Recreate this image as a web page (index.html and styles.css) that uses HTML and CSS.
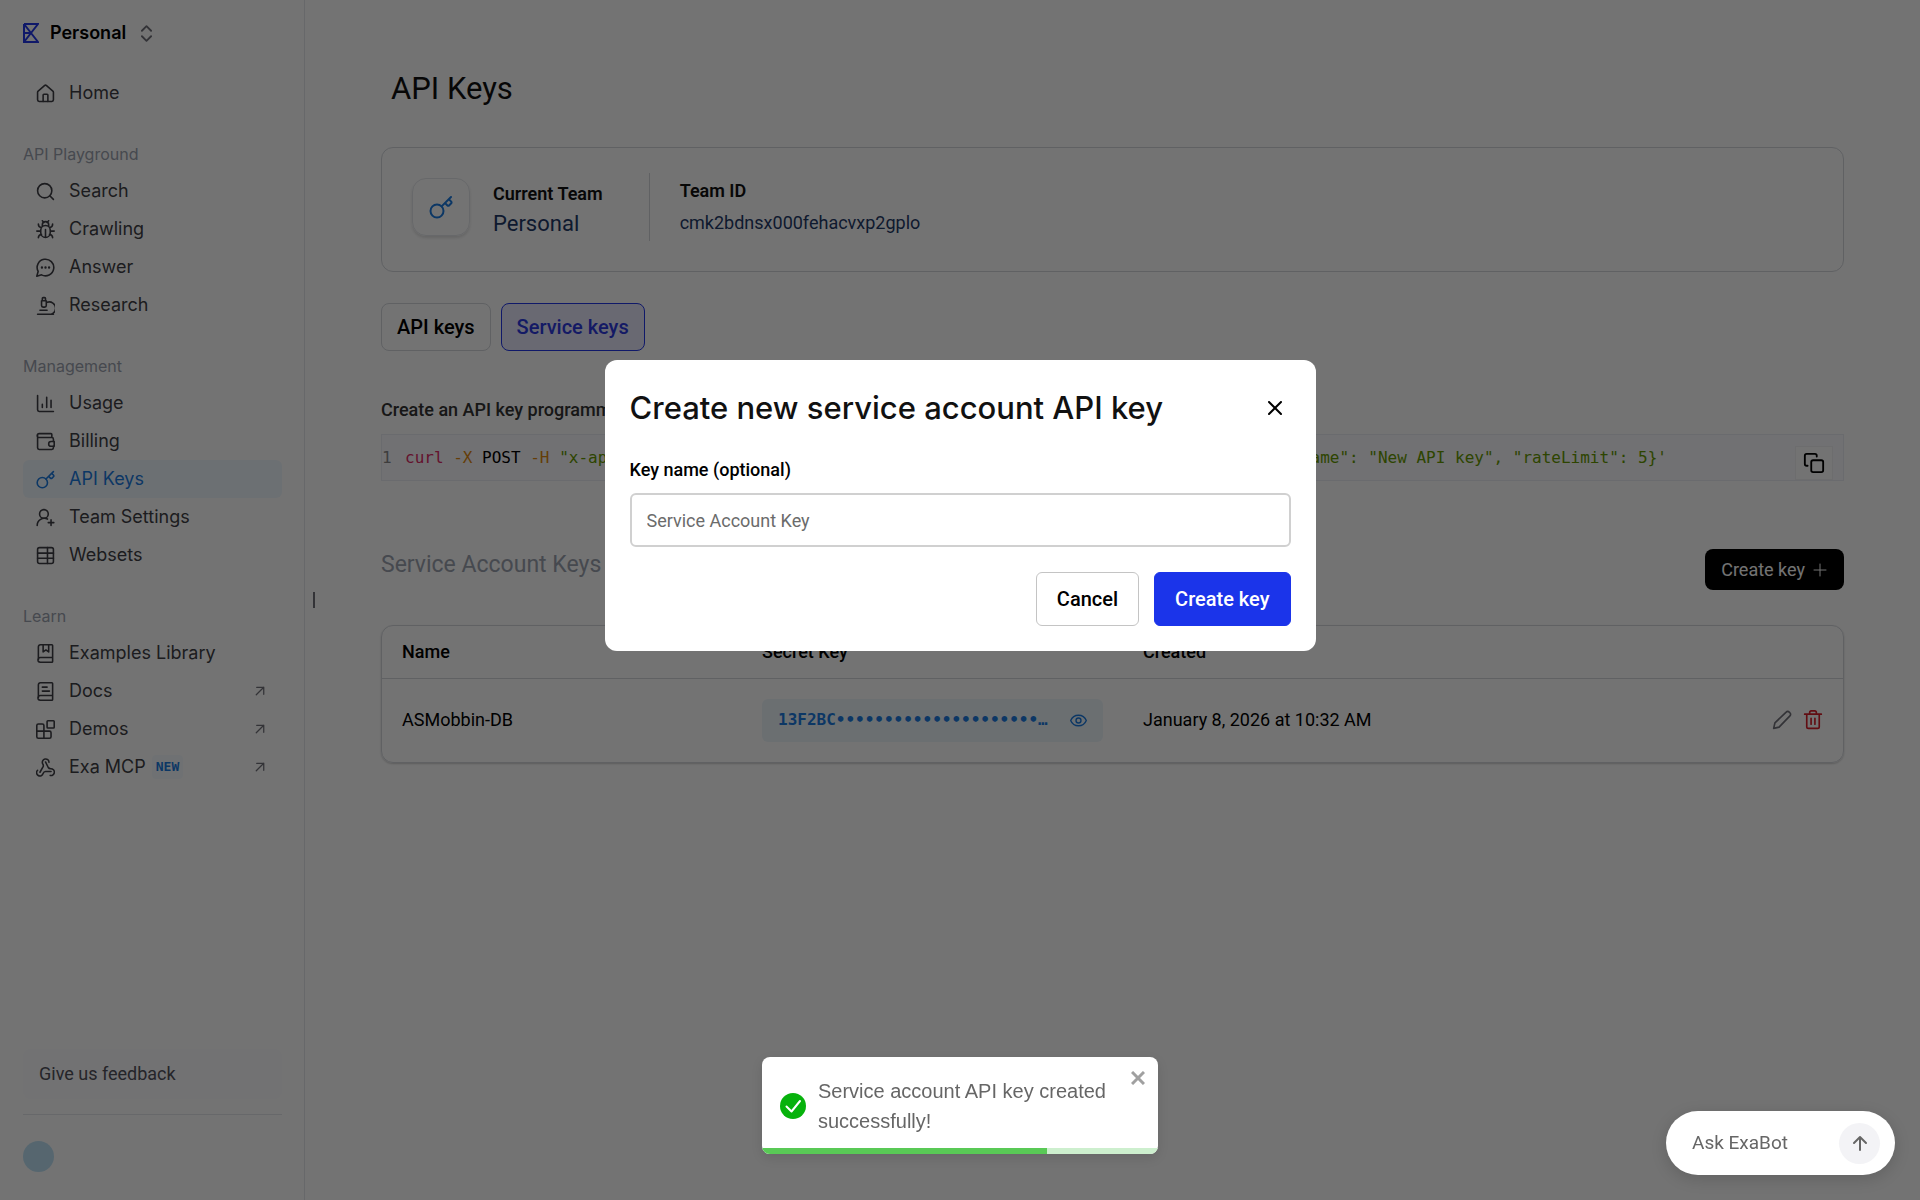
FILE: index.html
```html
<!DOCTYPE html>
<html lang="en">
<head>
    <meta charset="UTF-8">
    <meta name="viewport" content="width=device-width, initial-scale=1.0">
    <title>API Keys</title>
    <link rel="stylesheet" href="styles.css">
</head>
<body>
    <svg class="defs" width="0" height="0">
        <symbol id="key" viewBox="0 0 24 24">
            <circle cx="8" cy="16" r="6.500"/>
            <path d="M12.600 11.400 22 2M16 8l2.200 2.200a1.500 1.500 0 0 0 2.100 0l1.700-1.700a1.500 1.500 0 0 0 0-2.100L19.800 4.200"/>
        </symbol>
        <symbol id="arrow" viewBox="0 0 24 24">
            <path d="M3 21 21 3M4 3h17v17"/>
        </symbol>
    </svg>
    <div class="app">
        <aside class="sidebar">
            <button class="team">
                <svg class="logo" viewBox="0 0 16 20"><path d="M1 1h14L1 19M1 1v18h14L1 1M1 10h7"/></svg>
                Personal
                <svg class="sorter" viewBox="0 0 12 18"><path d="m1 6 5-5 5 5M1 12l5 5 5-5"/></svg>
            </button>
            <nav>
                <ul class="group">
                    <li><a href="#"><svg class="icon" viewBox="0 0 24 24"><path d="M15 22v-8a1 1 0 0 0-1-1h-4a1 1 0 0 0-1 1v8"/><path d="M2 10.500a2 2 0 0 1 .7-1.500l8-7a2 2 0 0 1 2.600 0l8 7a2 2 0 0 1 .7 1.500V20a2 2 0 0 1-2 2H4a2 2 0 0 1-2-2z"/></svg>Home</a></li>
                </ul>
                <h2>API Playground</h2>
                <ul class="group">
                    <li><a href="#"><svg class="icon" viewBox="0 0 24 24"><circle cx="11" cy="11" r="9"/><path d="m22 22-4.600-4.600"/></svg>Search</a></li>
                    <li><a href="#"><svg class="icon" viewBox="0 0 24 24"><path d="M6 13a6 6 0 0 1 12 0v3a6 6 0 0 1-12 0zM12 21v-9M8 7.500V6a4 4 0 0 1 8 0v1.500M8 1l2 2M16 1l-2 2M6 14H1M23 14h-5M6.500 9.500C4 9 3 7.500 3 5M17.500 9.500C20 9 21 7.500 21 5M7 18c-2.500.5-4 2-4 4.500M17 18c2.500.5 4 2 4 4.500"/></svg>Crawling</a></li>
                    <li><a href="#"><svg class="icon" viewBox="0 0 24 24"><path d="M7 21.300A10.500 10.500 0 1 0 2.700 17L1 23z"/><path class="dots" d="M7.500 12h.01M12 12h.01M16.500 12h.01"/></svg>Answer</a></li>
                    <li><a href="#"><svg class="icon" viewBox="0 0 24 24"><path d="M5 18h9M2 23h20M14 23a8 8 0 1 0 0-15h-1M9 14h2M7 12V6h6v6a2 2 0 0 1-2 2H9a2 2 0 0 1-2-2zM12 6V3a1 1 0 0 0-1-1H9a1 1 0 0 0-1 1v3"/></svg>Research</a></li>
                </ul>
                <h2>Management</h2>
                <ul class="group">
                    <li><a href="#"><svg class="icon" viewBox="0 0 24 24"><path d="M2 2v18a2 2 0 0 0 2 2h18M8 17v-4M13.500 17V4M19 17V8"/></svg>Usage</a></li>
                    <li><a href="#"><svg class="icon" viewBox="0 0 24 24"><path d="M20 7V3a1 1 0 0 0-1-1H4a2 2 0 0 0 0 5h16a2 2 0 0 1 2 2v3M2 4v16a2 2 0 0 0 2 2h16a2 2 0 0 0 2-2v-2"/><path d="M23 12h-4a3 3 0 0 0 0 6h4z"/></svg>Billing</a></li>
                    <li><a class="active" href="#"><svg class="icon"><use href="#key"/></svg>API Keys</a></li>
                    <li><a href="#"><svg class="icon" viewBox="0 0 24 24"><path d="M1.500 22a9 9 0 0 1 13-8M19 15v7M15.500 18.500h7"/><circle cx="10" cy="7.500" r="5.500"/></svg>Team Settings</a></li>
                    <li><a href="#"><svg class="icon" viewBox="0 0 24 24"><rect x="2" y="2" width="20" height="20" rx="2.500"/><path d="M2 9h20M2 15.500h20M14.500 2v20"/></svg>Websets</a></li>
                </ul>
                <h2>Learn</h2>
                <ul class="group">
                    <li><a href="#"><svg class="icon" viewBox="0 0 24 24"><path d="M3 20V3.500A2.500 2.500 0 0 1 5.500 1H20a1 1 0 0 1 1 1v20a1 1 0 0 1-1 1H5.500a2.500 2.500 0 0 1 0-6H21M9 1v9l3.500-2.500L16 10V1"/></svg>Examples Library</a></li>
                    <li><a href="#"><svg class="icon" viewBox="0 0 24 24"><path d="M3 20V3.500A2.500 2.500 0 0 1 5.500 1H20a1 1 0 0 1 1 1v20a1 1 0 0 1-1 1H5.500a2.500 2.500 0 0 1 0-6H21M8 6.500h6M8 11.500h9"/></svg>Docs<svg class="out"><use href="#arrow"/></svg></a></li>
                    <li><a href="#"><svg class="icon" viewBox="0 0 24 24"><rect x="14" y="1" width="9" height="9" rx="1"/><path d="M10 23V7a2 2 0 0 0-2-2H3a2 2 0 0 0-2 2v14a2 2 0 0 0 2 2h14a2 2 0 0 0 2-2v-5a2 2 0 0 0-2-2H1"/></svg>Demos<svg class="out"><use href="#arrow"/></svg></a></li>
                    <li><a href="#"><svg class="icon" viewBox="0 0 24 24"><path d="M19 17h-7c-2 0-2.500 1-3 2.500a4.200 4.200 0 1 1-7-4M5 18l4-7c.8-1.500.2-2.500-.6-3.800a4.200 4.200 0 1 1 8-1.700M12 5l3.500 7c.8 1.400 1.800 1.500 3.200 1.500a4.300 4.300 0 1 1-.7 8.500"/></svg>Exa MCP<span class="new">NEW</span><svg class="out"><use href="#arrow"/></svg></a></li>
                </ul>
            </nav>
            <div class="bottom">
                <button class="feedback">Give us feedback</button>
                <button class="avatar" aria-label="Account"></button>
            </div>
        </aside>
        <div class="handle"></div>
        <main>
            <h1>API Keys</h1>
            <section class="card">
                <div class="keyBox"><svg><use href="#key"/></svg></div>
                <div class="current">
                    <h3>Current Team</h3>
                    <p>Personal</p>
                </div>
                <div class="teamId">
                    <h3>Team ID</h3>
                    <p>cmk2bdnsx000fehacvxp2gplo</p>
                </div>
            </section>
            <div class="tabs">
                <button class="tab">API keys</button>
                <button class="tab selected">Service keys</button>
            </div>
            <p class="hint">Create an API key programmatically</p>
            <div class="code">
                <span class="line">1</span>
                <code><span class="cmd">curl</span> <span class="flag">-X</span> POST <span class="flag">-H</span> <span class="str">"x-api-key: API_KEY"</span> https://admin-api.exa.ai/team-management/api-keys <span class="flag">-d</span> <span class="str">'{"name": "New API key", "rateLimit": 5}'</span></code>
                <button class="copy" aria-label="Copy"><svg viewBox="0 0 24 24"><rect x="9" y="9" width="13" height="13" rx="2"/><path d="M5 15H4a2 2 0 0 1-2-2V4a2 2 0 0 1 2-2h9a2 2 0 0 1 2 2v1"/></svg></button>
            </div>
            <div class="listHead">
                <h2>Service Account Keys</h2>
                <button class="create">Create key <svg viewBox="0 0 14 14"><path d="M7 1v12M1 7h12"/></svg></button>
            </div>
            <div class="tableBox">
                <table>
                    <thead>
                        <tr><th class="colName">Name</th><th class="colKey">Secret Key</th><th>Created</th><th class="colActions"></th></tr>
                    </thead>
                    <tbody>
                        <tr>
                            <td>ASMobbin-DB</td>
                            <td>
                                <div class="secret">
                                    <span>13F2BC•••••••••••••••••••••…</span>
                                    <button aria-label="Show key"><svg viewBox="0 0 24 24"><path d="M1 12c4-10 18-10 22 0-4 10-18 10-22 0z"/><circle cx="12" cy="12" r="3.500"/></svg></button>
                                </div>
                            </td>
                            <td>January 8, 2026 at 10:32 AM</td>
                            <td>
                                <div class="actions">
                                    <button aria-label="Edit"><svg viewBox="0 0 24 24"><path d="M2 22l1.500-6.500L17 2.500a2.500 2.500 0 0 1 3.700 0l.8.8a2.500 2.500 0 0 1 0 3.700L8.500 20.500z"/></svg></button>
                                    <button class="delete" aria-label="Delete"><svg viewBox="0 0 24 24"><path d="M2 5h20M4.500 5v15a2 2 0 0 0 2 2h11a2 2 0 0 0 2-2V5M8 5V3a2 2 0 0 1 2-2h4a2 2 0 0 1 2 2v2M9.700 10v7M14.300 10v7"/></svg></button>
                                </div>
                            </td>
                        </tr>
                    </tbody>
                </table>
            </div>
        </main>
    </div>

    <div class="overlay">
        <form class="modal" role="dialog" aria-labelledby="modalTitle">
            <div class="modalHead">
                <h2 id="modalTitle">Create new service account API key</h2>
                <button class="close" type="button" aria-label="Close"><svg viewBox="0 0 14 14"><path d="M1 1l12 12M13 1 1 13"/></svg></button>
            </div>
            <label for="keyName">Key name (optional)</label>
            <input id="keyName" type="text" placeholder="Service Account Key">
            <div class="modalButtons">
                <button class="cancel" type="button">Cancel</button>
                <button class="submit" type="button">Create key</button>
            </div>
        </form>
    </div>

    <div class="toast" role="status">
        <svg class="check" viewBox="0 0 26 26"><circle cx="13" cy="13" r="13"/><path d="m6.500 13.500 5 5L20 8"/></svg>
        <p>Service account API key created successfully!</p>
        <button aria-label="Dismiss"><svg viewBox="0 0 14 14"><path d="M1 1l12 12M13 1 1 13"/></svg></button>
        <div class="progress"><div class="done"></div></div>
    </div>

    <button class="bot">Ask ExaBot<span><svg viewBox="0 0 16 16"><path d="M8 15V2M2 8l6-6 6 6"/></svg></span></button>
</body>
</html>
```
FILE: styles.css
```css
:root {
    --wide: Inter, "Liberation Sans", sans-serif;
    --body: Roboto, "Liberation Sans", sans-serif;
    --mono: "DejaVu Sans Mono", "Liberation Mono", monospace;
}
* {
    box-sizing: border-box;
}
body {
    margin: 0;
    font: 18px/24px var(--body);
    color: #000;
    background-color: #fff;
}
h1, h2, h3, p, ul {
    margin: 0;
    padding: 0;
    font-weight: 400;
}
button, input {
    font: inherit;
    color: inherit;
}
button {
    padding: 0;
    border: none;
    background-color: transparent;
    cursor: pointer;
}
svg {
    display: block;
    flex: none;
    fill: none;
    stroke: currentColor;
    stroke-width: 2;
    stroke-linecap: round;
    stroke-linejoin: round;
}
.defs {
    position: absolute;
}
.app {
    display: flex;
    min-height: 100vh;
}

/* sidebar */
.sidebar {
    display: flex;
    flex-direction: column;
    width: 305px;
    padding: 17px 22px 28px 23px;
    border-right: 1px solid #e5e7eb;
    font-family: var(--wide);
    color: #3f3f46;
}
.team {
    display: flex;
    align-items: center;
    height: 32px;
    gap: 11px;
    margin-bottom: 25px;
    font-size: 18px;
    font-weight: 600;
    color: #000;
}
.logo {
    width: 16px;
    height: 20px;
    color: #2438e8;
    stroke-linecap: butt;
    stroke-linejoin: miter;
}
.sorter {
    width: 11px;
    height: 17px;
    margin-left: 4px;
    color: #71717a;
}
.group {
    margin-bottom: 29px;
    list-style: none;
}
.sidebar h2 {
    margin-bottom: 5px;
    font-size: 16px;
    line-height: 26px;
    color: #9ca3af;
}
.sidebar a {
    display: flex;
    align-items: center;
    height: 38px;
    padding: 0 17px 0 13px;
    border-radius: 6px;
    color: inherit;
    text-decoration: none;
}
.sidebar a.active {
    color: #1c7be0;
    background-color: #f0f8ff;
}
.icon {
    width: 19px;
    height: 19px;
    margin-right: 14px;
}
.out {
    width: 10px;
    height: 10px;
    margin-left: auto;
    stroke-width: 3;
    color: #71717a;
}
.dots {
    stroke-width: 3;
}
.new {
    margin-left: 6px;
    padding: 0 4px;
    border-radius: 4px;
    font: 700 13px/24px var(--mono);
    color: #1c7be0;
    background-color: #f6fbff;
}
.bottom {
    position: relative;
    margin-top: auto;
}
.bottom::after {
    content: "";
    position: absolute;
    top: 65px;
    left: 0;
    right: 0;
    border-top: 1px solid #e5e7eb;
}
.feedback {
    display: block;
    width: 100%;
    height: 50px;
    padding: 0 16px;
    border-radius: 8px;
    font: 18px/24px var(--body);
    text-align: left;
    color: #52525b;
    background-color: #fcfcff;
}
.avatar {
    display: block;
    width: 31px;
    height: 31px;
    margin-top: 42px;
    border-radius: 50%;
    background-color: #bfe3f7;
}
.handle {
    align-self: center;
    width: 2px;
    height: 16px;
    margin-left: 8px;
    background-color: #71717a;
}

/* page */
main {
    flex: 1;
    min-width: 0;
    padding: 69px 76px 40px 66px;
}
h1 {
    margin-left: 10px;
    font-size: 31px;
    line-height: 40px;
    color: #111;
}
.card {
    display: flex;
    align-items: center;
    height: 125px;
    margin-top: 38px;
    padding: 0 30px 5px;
    border: 1px solid #d4d7dc;
    border-radius: 12px;
}
.keyBox {
    display: grid;
    place-items: center;
    width: 58px;
    height: 58px;
    margin-right: 23px;
    border: 1px solid #e5e7eb;
    border-radius: 14px;
    box-shadow: 0 2px 3px rgba(0, 0, 0, 0.12);
    color: #1c7be0;
}
.keyBox svg {
    width: 24px;
    height: 24px;
}
h3 {
    font-size: 18px;
    line-height: 24px;
    font-weight: 600;
    color: #111;
}
.card p {
    color: #1f3a68;
}
.current {
    padding-top: 5px;
}
.current p {
    margin-top: 4px;
    font-size: 22px;
    line-height: 28px;
}
.teamId {
    margin-left: 46px;
    padding: 6px 0 6px 30px;
    border-left: 1px solid #d4d7dc;
}
.teamId p {
    margin-top: 8px;
}
.tabs {
    display: flex;
    gap: 10px;
    margin-top: 31px;
}
.tab {
    height: 48px;
    padding: 0 15px;
    border: 1px solid #d4d7dc;
    border-radius: 8px;
    font-size: 20px;
    font-weight: 500;
}
.tab.selected {
    border-color: #2438e8;
    color: #2e3ae0;
    background-color: #e8e8fd;
}
.hint {
    margin-top: 47px;
    font-weight: 500;
    color: #333;
}
.code {
    position: relative;
    display: flex;
    align-items: center;
    height: 47px;
    margin-top: 12px;
    border: 1px solid #eceef3;
    font: 16px/24px var(--mono);
    white-space: nowrap;
    background-color: #fafafe;
}
.line {
    width: 23px;
    color: #888;
}
code {
    font: inherit;
}
.cmd {
    color: #dd2a66;
}
.flag {
    color: #e08a10;
}
.str {
    color: #669900;
}
.copy {
    position: absolute;
    right: 10px;
    bottom: 0;
    display: grid;
    place-items: center;
    width: 38px;
    height: 34px;
    border: 1px solid #f1f1f4;
    background-color: #fff;
}
.copy svg {
    width: 22px;
    height: 22px;
}
.listHead {
    display: flex;
    align-items: flex-start;
    justify-content: space-between;
    margin-top: 68px;
}
.listHead h2 {
    font-size: 23px;
    line-height: 32px;
    color: #9ca3af;
}
.create {
    display: flex;
    align-items: center;
    gap: 8px;
    height: 41px;
    padding: 0 17px 0 16px;
    border-radius: 8px;
    color: #fff;
    background-color: #000;
}
.create svg {
    width: 14px;
    height: 14px;
    stroke-width: 1;
}
.tableBox {
    margin-top: 35px;
    border: 1px solid #d4d7dc;
    border-radius: 12px;
    box-shadow: 0 1px 2px rgba(0, 0, 0, 0.2);
}
table {
    width: 100%;
    table-layout: fixed;
    border-collapse: collapse;
}
th, td {
    padding: 0 20px;
    text-align: left;
}
th {
    height: 52px;
    font-weight: 500;
    border-bottom: 1px solid #d4d7dc;
}
td {
    height: 84px;
}
.colName {
    width: 360px;
}
.colKey {
    width: 381px;
}
.colActions {
    width: 130px;
}
.secret {
    display: flex;
    align-items: center;
    justify-content: space-between;
    height: 43px;
    padding: 0 16px;
    border-radius: 6px;
    font: 700 16px/24px var(--mono);
    color: #1c7be0;
    background-color: #eef6fb;
}
.secret svg {
    width: 17px;
    height: 17px;
}
.actions {
    display: flex;
    justify-content: flex-end;
    gap: 11px;
    color: #71717a;
}
.actions svg {
    width: 20px;
    height: 20px;
}
.actions .delete {
    color: #d8202c;
}

/* modal */
.overlay {
    position: fixed;
    inset: 0;
    padding-top: 30vh;
    background-color: rgba(0, 0, 0, 0.55);
}
.modal {
    width: 711px;
    max-width: 100%;
    margin: 0 auto;
    padding: 25px;
    border-radius: 12px;
    background-color: #fff;
}
.modalHead {
    display: flex;
    align-items: center;
    justify-content: space-between;
    height: 46px;
}
.modalHead h2 {
    font: 500 31px/40px var(--wide);
    color: #111;
}
.close {
    padding: 9px;
}
.close svg {
    width: 14px;
    height: 14px;
}
.modal label {
    display: block;
    margin: 27px 0 11px;
    font-weight: 500;
}
.modal input {
    display: block;
    width: 100%;
    height: 54px;
    padding: 0 15px;
    border: 2px solid #d0d0d0;
    border-radius: 6px;
    background-color: #fff;
}
.modal input::placeholder {
    color: #6b6b6b;
    opacity: 1;
}
.modalButtons {
    display: flex;
    justify-content: flex-end;
    gap: 15px;
    margin-top: 25px;
}
.modalButtons button {
    height: 54px;
    padding: 0 20px;
    border: 1px solid #c4c4c4;
    border-radius: 6px;
    font-size: 20px;
    font-weight: 500;
}
.modalButtons .submit {
    border-color: #1b34ea;
    color: #fff;
    background-color: #1b34ea;
}

/* toast */
.toast {
    position: fixed;
    left: 50%;
    bottom: 46px;
    transform: translateX(-50%);
    display: flex;
    align-items: center;
    width: 396px;
    min-height: 97px;
    padding: 18px 40px 18px 18px;
    border-radius: 8px;
    overflow: hidden;
    font: 20px/30px "Liberation Sans", Arial, sans-serif;
    color: #666;
    background-color: #fff;
    box-shadow: 0 4px 12px rgba(0, 0, 0, 0.1);
}
.check {
    width: 26px;
    height: 26px;
    margin-right: 12px;
}
.check circle {
    fill: #07b20c;
    stroke: none;
}
.check path {
    stroke: #fff;
}
.toast button {
    position: absolute;
    top: 14px;
    right: 13px;
    color: #a0a0a0;
}
.toast button svg {
    width: 14px;
    height: 14px;
    stroke-width: 3;
    stroke-linecap: butt;
}
.progress {
    position: absolute;
    left: 0;
    right: 0;
    bottom: 0;
    background-color: #cdefce;
}
.done {
    width: 72%;
    height: 6px;
    background-color: #59c956;
}

/* chat */
.bot {
    position: fixed;
    right: 25px;
    bottom: 25px;
    display: flex;
    align-items: center;
    justify-content: space-between;
    width: 229px;
    height: 64px;
    padding: 0 15px 0 26px;
    border-radius: 32px;
    font-size: 19px;
    color: #666;
    background-color: #fff;
    box-shadow: 0 4px 16px rgba(0, 0, 0, 0.15);
}
.bot span {
    display: grid;
    place-items: center;
    width: 41px;
    height: 41px;
    border-radius: 50%;
    background-color: #f3f3f6;
}
.bot svg {
    width: 16px;
    height: 16px;
}
```
